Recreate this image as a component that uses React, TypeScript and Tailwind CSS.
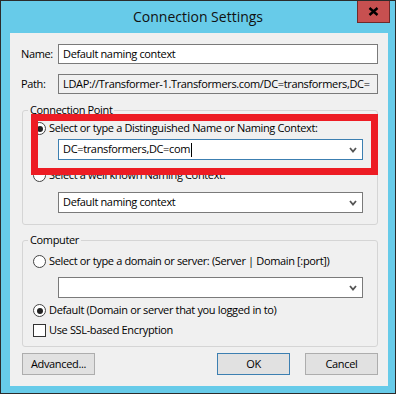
import React from 'react';

const font = "font-['Open_Sans',sans-serif]";

const Chevron = () => (
  <svg width="8" height="6" viewBox="0 0 8 6" className="shrink-0">
    <polyline points="1,1 4,4.5 7,1" fill="none" stroke="#555" strokeWidth="1.8" />
  </svg>
);

const Radio: React.FC<{ checked?: boolean }> = ({ checked }) => (
  <span className="w-[13px] h-[13px] rounded-full border border-[#444] bg-white flex items-center justify-center shrink-0">
    {checked && <span className="w-[6px] h-[6px] rounded-full bg-[#222]" />}
  </span>
);

const Combo: React.FC<{ value?: string; focused?: boolean; caret?: boolean }> = ({ value, focused, caret }) => (
  <div
    className={`ml-[25px] w-[305px] h-[21px] bg-white border flex items-center pl-[4px] pr-[5px] ${
      focused ? 'border-[#3c7fb1]' : 'border-[#7a7a7a]'
    }`}
  >
    <span className="flex-1 flex items-center whitespace-nowrap">
      {value}
      {caret && <span className="w-px h-[14px] bg-black ml-px" />}
    </span>
    <Chevron />
  </div>
);

const Button: React.FC<{ label: string; primary?: boolean }> = ({ label, primary }) => (
  <button
    className={`w-[73px] h-[22px] bg-[#e1e1e1] border text-center leading-[20px] ${
      primary ? 'border-[#3c7fb1]' : 'border-[#adadad]'
    }`}
  >
    {label}
  </button>
);

export default function App() {
  return (
    <div className={`w-[398px] h-[396px] bg-white ${font} text-[11px] tracking-[-0.35px] text-black`}>
      <div className="relative w-[396px] h-[394px] border border-[#2b2b2b] bg-[#67cbe9] flex flex-col">
        {/* Barre de titre */}
        <div className="h-[32px] flex items-center justify-center text-[14px] tracking-normal text-[#111] pb-[2px]">
          Connection Settings
        </div>
        <div className="absolute right-[5px] top-0 w-[33px] h-[22px] bg-[#c75050] border border-[#6e2a2a] border-t-0 flex items-center justify-center">
          <svg width="11" height="9" viewBox="0 0 11 9">
            <path d="M1.5 1 L9.5 8 M9.5 1 L1.5 8" stroke="#000" strokeWidth="2.4" />
          </svg>
        </div>

        {/* Zone client */}
        <div className="relative ml-[9px] w-[378px] h-[353px] bg-[#f0f0f0] pt-[11px] pl-[11px] flex flex-col">
          <div className="flex items-center h-[20px]">
            <span className="w-[37px]">Name:</span>
            <div className="w-[320px] h-[20px] bg-white border border-[#7a7a7a] flex items-center px-[4px] whitespace-nowrap">
              Default naming context
            </div>
          </div>
          <div className="flex items-center h-[20px] mt-[10px]">
            <span className="w-[37px]">Path:</span>
            <div className="w-[320px] h-[20px] border border-[#7a7a7a] flex items-center px-[4px] whitespace-nowrap overflow-hidden">
              LDAP://Transformer-1.Transformers.com/DC=transformers,DC=
            </div>
          </div>

          {/* Connection Point */}
          <fieldset className="mt-[9px] ml-[1px] w-[356px] border border-[#d5d5d5] rounded-[3px] px-[10px] pb-[11px]">
            <legend className="-ml-[5px] px-[2px] leading-[14px]">Connection Point</legend>
            <div className="flex items-center gap-[3px] h-[15px] mt-[4px]">
              <Radio checked />
              <span>Select or type a Distinguished Name or Naming Context:</span>
            </div>
            <div className="mt-[3px]">
              <Combo value="DC=transformers,DC=com" focused caret />
            </div>
            <div className="flex items-center gap-[3px] h-[15px] mt-[8px]">
              <Radio />
              <span>Select a well known Naming Context:</span>
            </div>
            <div className="mt-[9px]">
              <Combo value="Default naming context" />
            </div>
          </fieldset>

          {/* Computer */}
          <fieldset className="mt-[8px] ml-[1px] w-[356px] border border-[#d5d5d5] rounded-[3px] px-[10px] pb-[8px]">
            <legend className="-ml-[5px] px-[2px] leading-[14px]">Computer</legend>
            <div className="flex items-center gap-[3px] h-[15px] mt-[7px]">
              <Radio />
              <span>Select or type a domain or server: (Server | Domain [:port])</span>
            </div>
            <div className="mt-[8px]">
              <Combo />
            </div>
            <div className="flex items-center gap-[3px] h-[15px] mt-[5px]">
              <Radio checked />
              <span>Default (Domain or server that you logged in to)</span>
            </div>
            <div className="flex items-center gap-[3px] h-[15px] mt-[5px]">
              <span className="w-[13px] h-[13px] border border-[#333] bg-white shrink-0" />
              <span>Use SSL-based Encryption</span>
            </div>
          </fieldset>

          <div className="flex items-center mt-[6px] ml-[1px] w-[356px]">
            <Button label="Advanced..." />
            <div className="flex-1" />
            <Button label="OK" primary />
            <div className="w-[15px]" />
            <Button label="Cancel" />
          </div>

          {/* Cadre rouge d'annotation */}
          <div className="absolute left-[21px] top-[81px] w-[347px] h-[61px] border-[7px] border-[#ed1c24]" />
        </div>
      </div>
    </div>
  );
}
